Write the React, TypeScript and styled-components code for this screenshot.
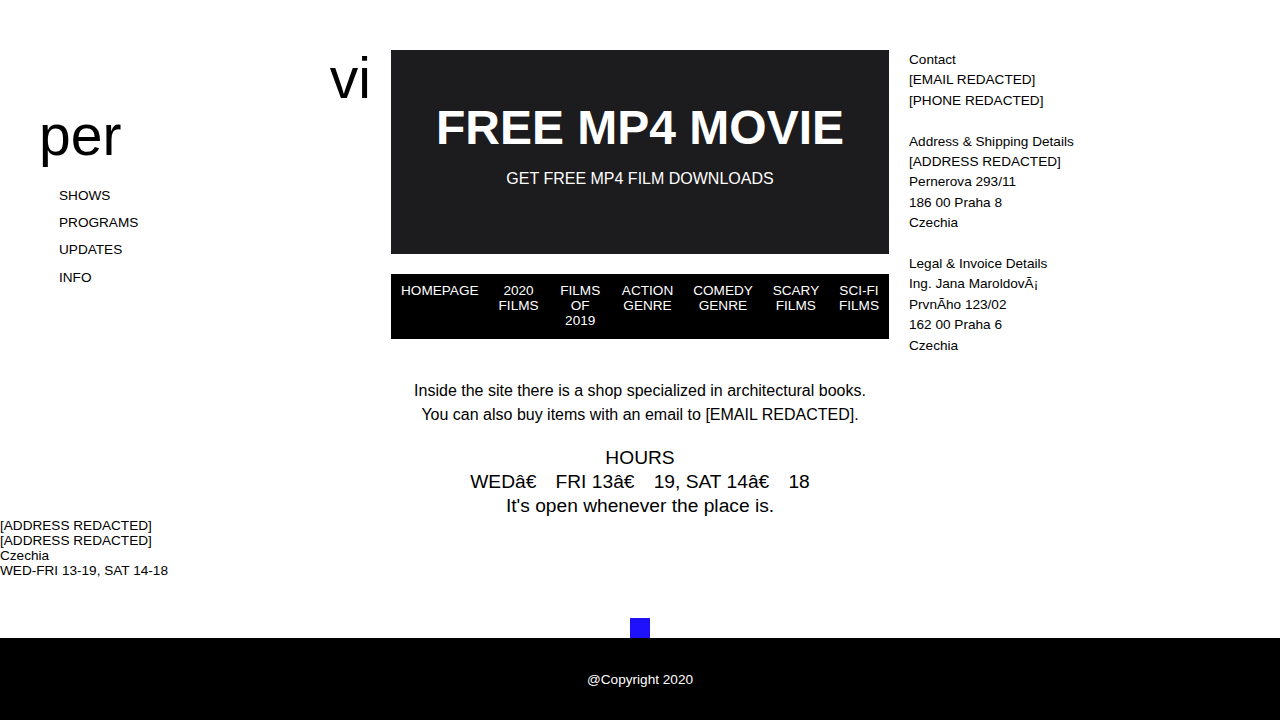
import React from "react";
import styled, { createGlobalStyle } from "styled-components";

const Global = createGlobalStyle`
  html, body { margin: 0; padding: 0; background: #ffffff; }
  body {
    font-family: "Liberation Sans", Arial, Helvetica, sans-serif;
    color: #000000;
  }
  * { box-sizing: border-box; }
`;

const Page = styled.div`
  display: flex;
  flex-direction: column;
`;

const Layout = styled.div`
  display: grid;
  grid-template-columns: 1fr 498px 1fr;
  column-gap: 20px;
  padding-top: 50px;
  align-items: start;
`;

const Side = styled.aside`
  display: flex;
  flex-direction: column;
`;

const LogoPart = styled.div<{ $align: "left" | "right"; $indent?: number }>`
  font-size: 57px;
  line-height: 57px;
  text-align: ${(p) => p.$align};
  padding-left: ${(p) => p.$indent ?? 0}px;
`;

const NavList = styled.ul`
  list-style: none;
  margin: 18px 0 0;
  padding: 0 0 0 59px;
  font-size: 13.6px;
  line-height: 27.2px;
  text-transform: uppercase;
`;

const NavItem = styled.li``;

const Center = styled.main`
  display: flex;
  flex-direction: column;
`;

const Hero = styled.header`
  height: 204px;
  background: #1c1b1d;
  color: #ffffff;
  padding-top: 50px;
  text-align: center;
`;

const HeroTitle = styled.h1`
  margin: 0;
  font-size: 48px;
  line-height: 55px;
  font-weight: 700;
`;

const HeroSub = styled.p`
  margin: 15px 0 0;
  font-size: 16px;
  line-height: 18px;
`;

const MenuBar = styled.nav`
  margin-top: 20px;
  background: #000000;
  display: flex;
  justify-content: space-between;
`;

const MenuItem = styled.a`
  padding: 9px 10px 11px;
  color: #ffffff;
  font-size: 13.6px;
  line-height: 15px;
  text-align: center;
  text-transform: uppercase;
  text-decoration: none;
  flex: 0 1 auto;
`;

const Intro = styled.p`
  margin: 40px 0 0;
  font-size: 16px;
  line-height: 24px;
  text-align: center;
`;

const Hours = styled.div`
  margin-top: 19px;
  font-size: 19.2px;
  line-height: 24px;
  text-align: center;
`;

const Contact = styled.aside`
  font-size: 13.6px;
  line-height: 20.4px;
`;

const Group = styled.div`
  margin-bottom: 20.4px;
`;

const Line = styled.div``;

const Address = styled.address`
  font-style: normal;
  font-size: 13.6px;
  line-height: 15px;
`;

const TopButton = styled.a`
  display: block;
  width: 20px;
  height: 20px;
  margin: 40px auto 0;
  background: #1f12fb;
`;

const Footer = styled.footer`
  height: 82px;
  background: #000000;
  color: #ffffff;
  font-size: 13.6px;
  display: flex;
  align-items: center;
  justify-content: center;
`;

const menu = ["Homepage", "2020 Films", "Films of 2019", "Action Genre", "Comedy Genre", "Scary Films", "Sci-Fi Films"];
const nav = ["Shows", "Programs", "Updates", "Info"];

const groups: string[][] = [
  ["Contact", "[EMAIL REDACTED]", "[PHONE REDACTED]"],
  ["Address & Shipping Details", "[ADDRESS REDACTED]", "Pernerova 293/11", "186 00 Praha 8", "Czechia"],
  ["Legal & Invoice Details", "Ing. Jana Maroldov\u00C3\u00A1", "Prvn\u00C3\u00ADho 123/02", "162 00 Praha 6", "Czechia"],
];

export default function App() {
  return (
    <Page>
      <Global />
      <Layout>
        <Side>
          <LogoPart $align="right">vi</LogoPart>
          <LogoPart $align="left" $indent={39}>per</LogoPart>
          <NavList>
            {nav.map((n) => (
              <NavItem key={n}>{n}</NavItem>
            ))}
          </NavList>
        </Side>
        <Center>
          <Hero>
            <HeroTitle>FREE MP4 MOVIE</HeroTitle>
            <HeroSub>GET FREE MP4 FILM DOWNLOADS</HeroSub>
          </Hero>
          <MenuBar>
            {menu.map((m) => (
              <MenuItem key={m} href="#">{m}</MenuItem>
            ))}
          </MenuBar>
          <Intro>
            Inside the site there is a shop specialized in architectural books.
            <br />
            You can also buy items with an email to [EMAIL REDACTED].
          </Intro>
          <Hours>
            <Line>HOURS</Line>
            <Line>{"WED\u00E2\u20AC\u2003FRI 13\u00E2\u20AC\u200319, SAT 14\u00E2\u20AC\u200318"}</Line>
            <Line>It's open whenever the place is.</Line>
          </Hours>
        </Center>
        <Contact>
          {groups.map((g, i) => (
            <Group key={i}>
              {g.map((l, j) => (
                <Line key={j}>{l}</Line>
              ))}
            </Group>
          ))}
        </Contact>
      </Layout>
      <Address>
        <Line>[ADDRESS REDACTED]</Line>
        <Line>[ADDRESS REDACTED]</Line>
        <Line>Czechia</Line>
        <Line>WED-FRI 13-19, SAT 14-18</Line>
      </Address>
      <TopButton href="#" aria-label="Back to top" />
      <Footer>@Copyright 2020</Footer>
    </Page>
  );
}
